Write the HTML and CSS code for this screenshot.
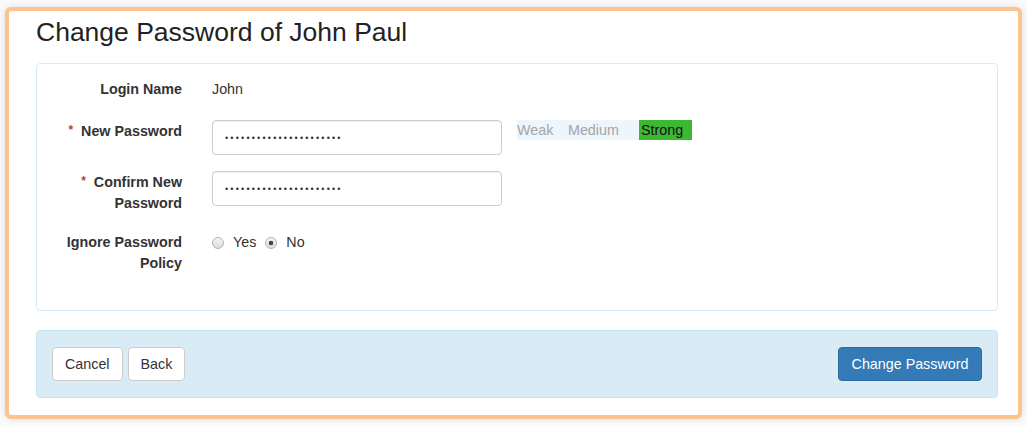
FILE: index.html
```html
<!DOCTYPE html>
<html lang="en">
<head>
  <meta charset="UTF-8" />
  <title>Change Password</title>
  <link rel="stylesheet" href="styles.css">
</head>
<body>

  <div class="frame">
    <h3 class="page-title">Change Password of John Paul</h3>

    <div class="panel">
      <div class="form-row row-login">
        <label class="field-label">Login Name</label>
        <div class="static">John</div>
      </div>

      <div class="form-row">
        <label class="field-label"><span class="req">*</span>New Password</label>
        <input class="field" type="password" value="xxxxxxxxxxxxxxxxxxxxxx" />
        <div class="strength">
          <span class="lvl weak">Weak</span>
          <span class="lvl medium">Medium</span>
          <span class="lvl strong">Strong</span>
        </div>
      </div>

      <div class="form-row row-confirm">
        <label class="field-label"><span class="req">*</span>Confirm New Password</label>
        <input class="field" type="password" value="xxxxxxxxxxxxxxxxxxxxxx" />
      </div>

      <div class="form-row">
        <label class="field-label">Ignore Password Policy</label>
        <div class="radios">
          <label class="radio"><input type="radio" name="ignore" /> Yes</label>
          <label class="radio"><input type="radio" name="ignore" checked /> No</label>
        </div>
      </div>
    </div>

    <div class="panel-footer">
      <div class="left-btns">
        <button class="btn">Cancel</button>
        <button class="btn">Back</button>
      </div>
      <button class="btn btn-primary">Change Password</button>
    </div>
  </div>

</body>
</html>
```

FILE: styles.css
```css
* { box-sizing: border-box; margin: 0; padding: 0; }
html, body {
  height: 100%;
  background: #fafafa;
  font-family: "Liberation Sans", Arial, sans-serif;
  font-size: 14.3px;
  color: #333;
}
body { padding: 7px 5px; }

.frame {
  height: 412px;
  background: #fff;
  border: 4px solid #fbc48f;
  border-radius: 6px;
  box-shadow: 0 0 6px rgba(0, 0, 0, 0.12);
  padding: 7px 20px 0 27px;
}
.page-title {
  font-size: 26.5px;
  font-weight: normal;
  line-height: 29px;
  color: #222;
  margin-bottom: 16px;
}

.panel {
  border: 1px solid #d4edf5;
  border-radius: 4px;
  padding: 15px 15px 36px;
  display: flex;
  flex-direction: column;
  gap: 16px;
}
.form-row {
  display: flex;
  align-items: flex-start;
}
.row-login { height: 25px; }
.row-confirm { margin-bottom: 2px; }
.field-label {
  width: 130px;
  margin-right: 30px;
  text-align: right;
  font-weight: bold;
  line-height: 21px;
}
.req {
  color: #b9403c;
  font-size: 12px;
  margin-right: 8px;
  vertical-align: 2px;
}
.static { line-height: 21px; }

.field {
  width: 290px;
  height: 35px;
  border: 1px solid #ccc;
  border-radius: 4px;
  padding: 0 12px;
  font-family: "Liberation Sans", Arial, sans-serif;
  font-size: 9px;
  letter-spacing: 2.2px;
  color: #333;
  box-shadow: inset 0 1px 1px rgba(0, 0, 0, 0.06);
  outline: none;
}

.strength {
  display: flex;
  margin-left: 15px;
  height: 20px;
  background: #edf5fd;
  line-height: 20px;
}
.lvl { color: #a5a5a5; }
.weak { width: 51px; }
.medium { width: 71px; }
.strong {
  width: 53px;
  padding-left: 2px;
  background: #3db833;
  color: #111;
}

.radios {
  display: flex;
  gap: 9px;
  line-height: 21px;
}
.radio {
  display: flex;
  align-items: center;
  gap: 8px;
}
.radio input {
  appearance: none;
  width: 12px;
  height: 12px;
  border: 1px solid #b4b4b4;
  border-radius: 50%;
  background: linear-gradient(#f4f4f4, #dcdcdc);
  margin: 0 1px 0 0;
}
.radio input:checked {
  background: radial-gradient(circle, #444 0 2px, transparent 2.6px), linear-gradient(#f4f4f4, #dcdcdc);
}

.panel-footer {
  margin-top: 19px;
  background: #d9ecf6;
  border: 1px solid #c6e6f2;
  border-radius: 4px;
  padding: 16px 15px;
  display: flex;
  justify-content: space-between;
  align-items: center;
}
.left-btns { display: flex; gap: 5px; }
.btn {
  height: 34px;
  padding: 0 12px;
  border: 1px solid #ccc;
  border-radius: 4px;
  background: #fff;
  font-family: "Liberation Sans", Arial, sans-serif;
  font-size: 14.3px;
  color: #333;
  cursor: pointer;
}
.btn-primary {
  width: 144px;
  background: #337ab7;
  border-color: #2e6da4;
  color: #fff;
}
```
